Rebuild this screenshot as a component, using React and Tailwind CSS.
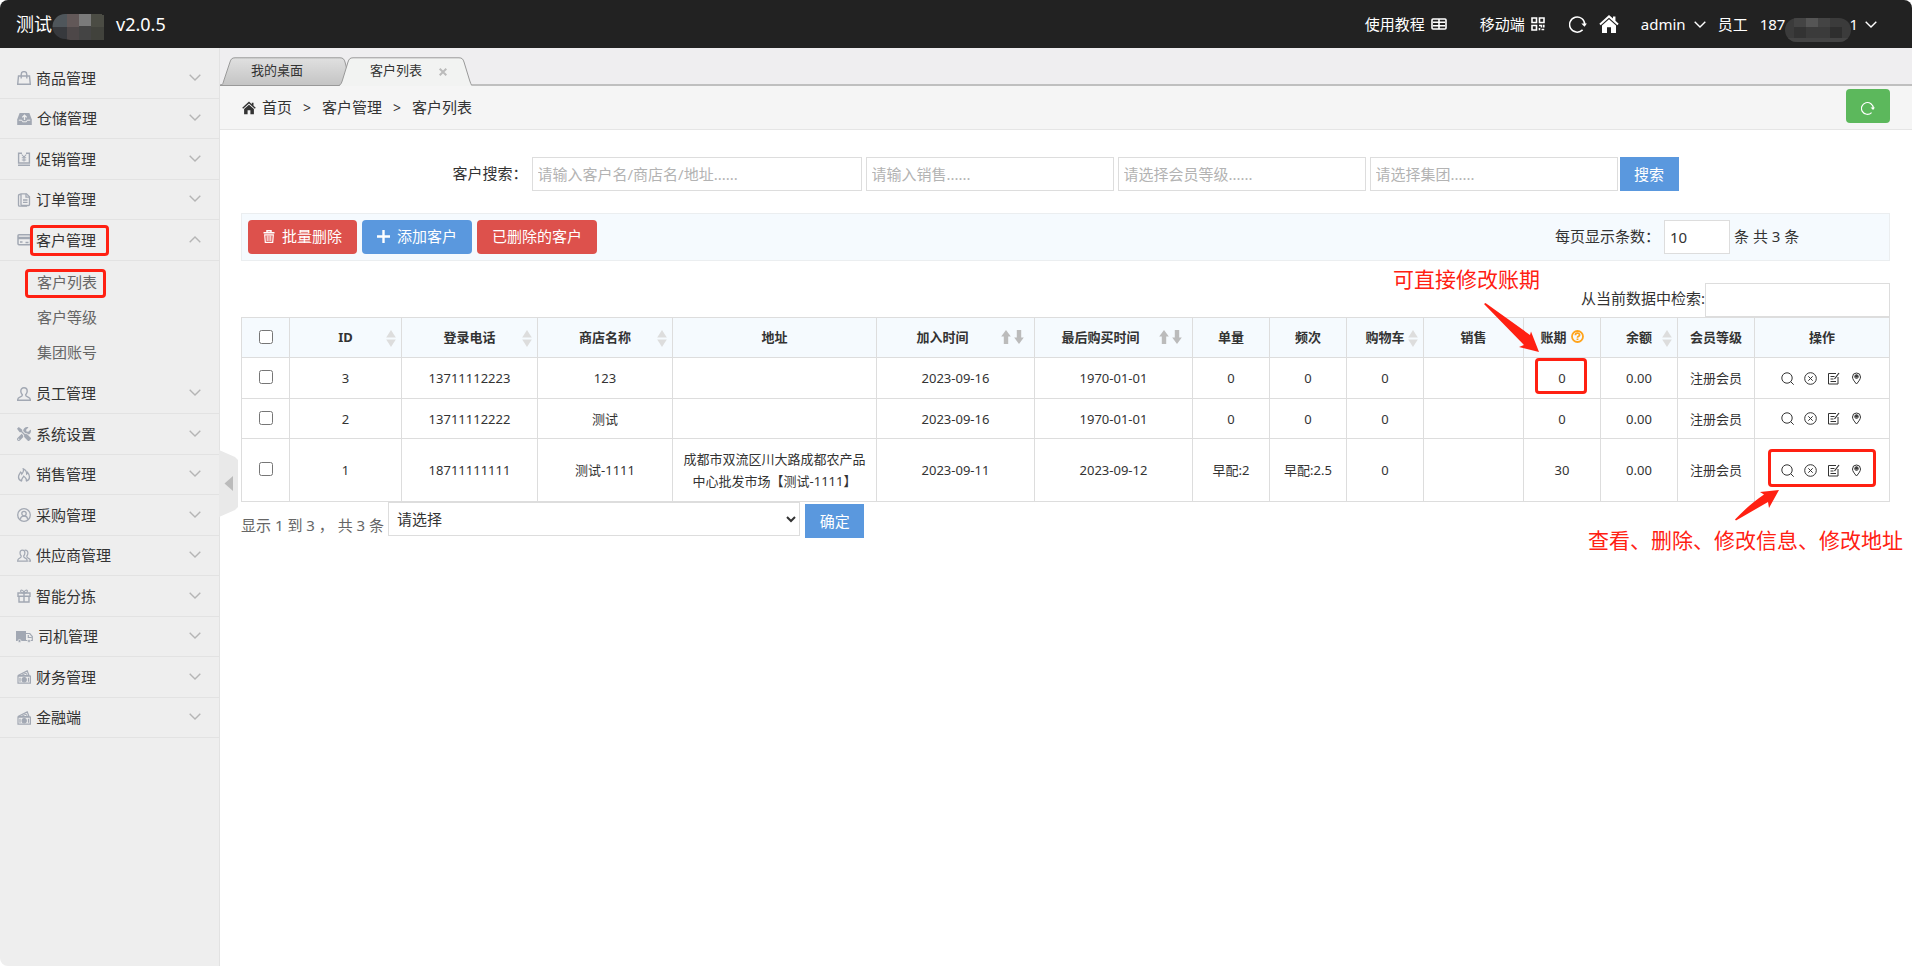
import React, { useState } from 'react';
import { FaTools } from 'react-icons/fa';

const Svg = ({ children, className = 'size-[14px]', box = '0 0 14 14', width = 1.2 }) => (
  <svg viewBox={box} className={`shrink-0 ${className}`} fill="none" stroke="currentColor" strokeWidth={width} aria-hidden="true">
    {children}
  </svg>
);

const BagIcon = () => (
  <Svg width={1.4}>
    <path d="M1.5 5h11l.8 8.300H.7z" />
    <path d="M4.200 7.500V3.400a2.800 2.800 0 0 1 5.600 0v4.100" />
  </Svg>
);

const StoreIcon = () => (
  <Svg className="w-[15px] h-[14px]" box="0 0 15 14">
    <path d="M2.600 1h9.800l2.400 6.500V13H.2V7.500z" fill="currentColor" stroke="none" />
    <path d="M7.500 8V3.500M5.300 5.400l2.200-2.200 2.200 2.200" stroke="#eee" strokeWidth="1.3" />
    <path d="M1.800 8.200h3l.8 1.600h3.800l.8-1.600h3" stroke="#eee" strokeWidth="1" />
  </Svg>
);

const CouponIcon = () => (
  <Svg width={1.4}>
    <path d="M5 1.200H1.600v9.800h10.800V1.200H9M1 13.200h12" />
    <path d="M4.700 2.500l2.300 2.500 2.300-2.500M7 5v4.500M4.800 5.800h4.400M4.800 8h4.400" strokeWidth="1.1" />
  </Svg>
);

const OrderIcon = () => (
  <Svg width={1.3}>
    <path d="M4 .8h5.500l3 3v7.700c0 .6-.4 1-1 1H5c-.6 0-1-.4-1-1z" />
    <path d="M9 .8v3.400h3.500M6 7h4.500M6 9.300h4.500" />
    <path d="M3.800 1.500H2.500c-.6 0-1 .4-1 1v9.700c0 .6.4 1 1 1H10" />
  </Svg>
);

const CardIcon = () => (
  <Svg width={1.5}>
    <rect x="1" y="1.800" width="12.500" height="10" rx="1" />
    <path d="M1 5h12.500" strokeWidth="2.4" />
    <path d="M3 9h2.500M8.500 9.500h3" />
  </Svg>
);

const UserIcon = () => (
  <Svg width={1.4}>
    <path d="M7 .8c2 0 3.200 1.400 3.200 3.400 0 1.700-.8 2.700-1.500 3.500-.4 1.600 1.200 2 2.800 2.600 1.300.5 1.800 1.200 1.900 3H.6c.1-1.800.6-2.500 1.900-3 1.600-.6 3.200-1 2.800-2.600-.7-.8-1.500-1.800-1.500-3.500C3.800 2.200 5 .8 7 .8z" />
  </Svg>
);

const FireIcon = () => (
  <Svg width={1.3}>
    <path d="M4.800 13.200C2.700 12.500 1.500 11 1.500 9c0-2 1.300-3 2-4.800.8.4 1.200 1 1.300 1.800C6.300 4.500 6.800 2.700 6.300.8 8.600 1.800 9.700 3.700 9.700 6c.5-.4.8-.8.9-1.500 1.200 1.300 1.900 2.800 1.900 4.500 0 2-1.200 3.500-3.300 4.200" />
    <path d="M4.800 13.200c-1-1.900.9-2.900 1.900-5 1.500 1.100 3.300 3 2.500 5" />
  </Svg>
);

const BuyerIcon = () => (
  <Svg width={1.3}>
    <circle cx="7" cy="7" r="6.300" />
    <circle cx="7" cy="5.600" r="2.200" />
    <path d="M3.400 11.600c0-2.500 1.500-3.600 3.600-3.600s3.600 1.100 3.600 3.600" />
  </Svg>
);

const UsersIcon = () => (
  <Svg>
    <path d="M5.400 1.200c1.600 0 2.500 1.100 2.500 2.900 0 1.500-.6 2.200-1.200 2.900-.2 1.600 1 1.800 2.200 2.400 1 .5 1.300 1.300 1.400 2.800H.6c.1-1.500.5-2.200 1.400-2.700 1.200-.6 2.400-.9 2.200-2.500C3.600 6.300 3 5.600 3 4.100c0-1.800.8-2.900 2.400-2.900z" />
    <path d="M7.500 1.300c2.200-.6 3.400.7 3.400 2.800 0 1.400-.5 2.200-1.100 2.900-.1 1.300.8 1.900 1.800 2.400 1.200.5 1.800 1 1.900 2.800h-2" />
  </Svg>
);

const GiftIcon = () => (
  <Svg width={1.4}>
    <path d="M1 4h12v3.200H1zM2 7v6h10V7M7 4v9" />
    <path d="M7 4C5 4 3.600 3.200 3.600 2.200 3.600.6 6.500.6 7 4zM7 4c2 0 3.400-.8 3.400-1.800C10.400.6 7.500.6 7 4z" strokeWidth="1.1" />
  </Svg>
);

const TruckIcon = () => (
  <Svg className="w-[17px] h-[13px] -ml-px" box="0 0 17 13">
    <path d="M0 1h10v10H0z" fill="currentColor" stroke="none" />
    <path d="M10 3.500h3.800l2.500 3v4H10" width="1.4" />
    <path d="M12.300 5v2.500h3.500" />
    <circle cx="3.500" cy="11" r="1.500" fill="currentColor" stroke="#eee" strokeWidth=".7" />
    <circle cx="13" cy="11" r="1.500" fill="currentColor" stroke="#eee" strokeWidth=".7" />
  </Svg>
);

const CashIcon = () => (
  <Svg>
    <path d="M1 6.200h12.400v7H1z" />
    <path d="M1 5.500L10.200.9l1.800 4.600z" />
    <path d="M4.500 5.300l4.600-2.200 1.200 2.200" strokeWidth="1" />
    <circle cx="7.200" cy="9.700" r="2.100" fill="currentColor" />
    <path d="M3 7.800v4M11.500 7.800v4" />
  </Svg>
);

const Chevron = ({ up = false, className = '' }) => (
  <Svg className={`w-3 h-[7px] ${className}`} box="0 0 12 7" width={1.4}>
    <path d={up ? 'M.7 6.300L6 1l5.300 5.300' : 'M.7.7L6 6 11.300.7'} />
  </Svg>
);

const HomeIcon = ({ className }) => (
  <Svg className={className} box="0 0 18 18">
    <path d="M9 .8L.3 8.800l1.200 1.300L9 3.300l7.500 6.800 1.200-1.300-2.900-2.700V2.300h-2.200v1.800z" fill="currentColor" stroke="none" />
    <path d="M9 4.800l-6.300 5.600V17h4.500v-5h3.600v5h4.500v-6.600z" fill="currentColor" stroke="none" />
  </Svg>
);

const RefreshIcon = ({ className }) => (
  <Svg className={className} box="0 0 18 18" width={1.5}>
    <path d="M13.600 14.900A7.600 7.600 0 1 1 15.800 9.500" />
    <path d="M12.300 8.500h5.600l-2.400 3.200z" fill="currentColor" stroke="none" />
  </Svg>
);

const TableIcon = () => (
  <Svg className="w-4 h-3" box="0 0 16 12" width={1.6}>
    <rect x="1" y="1" width="14" height="10" rx="1" />
    <path d="M8 1v10M2 4.300h12M2 7.700h12" />
  </Svg>
);

const QrIcon = () => (
  <Svg width={1.6}>
    <path d="M1 1h4.500v4.500H1zM8.500 1H13v4.500H8.500zM1 8.500h4.500V13H1z" />
    <path d="M8 8.500h2.500v2M12.800 7.800v2.700M8.500 11v2.200M10.500 12.500h2.700" />
  </Svg>
);

const TrashIcon = () => (
  <Svg className="w-3 h-[13px]" box="0 0 12 13">
    <path d="M.5 2.800h11M4 2.500V.8h4v1.700" strokeWidth="1.5" />
    <path d="M1.700 4.800l.6 7.500h7.400l.6-7.500z" />
    <path d="M4.200 5.500V11M6 5.500V11M7.800 5.500V11" strokeWidth="1" />
  </Svg>
);

const SortIcon = () => (
  <svg viewBox="0 0 10 17" className="absolute right-[5px] top-1/2 -mt-2 w-[10px] h-[17px]" fill="#ddd" aria-hidden="true">
    <path d="M5 0l4.800 7.500H.2zM5 17l4.800-7.500H.2z" />
  </svg>
);

const ArrowsIcon = () => (
  <svg viewBox="0 0 23 14" className="absolute right-[10px] top-1/2 -mt-2 w-[23px] h-[14px]" fill="#bbb" aria-hidden="true">
    <path d="M5 0l4.800 6.500H7.200V14H2.800V6.500H.2zM18 14l4.800-6.500h-2.600V0h-4.400v7.500h-2.600z" />
  </svg>
);

const menu = [
  { name: '商品管理', icon: <BagIcon /> },
  { name: '仓储管理', icon: <StoreIcon /> },
  { name: '促销管理', icon: <CouponIcon /> },
  { name: '订单管理', icon: <OrderIcon /> },
  { name: '客户管理', icon: <CardIcon />, children: ['客户列表', '客户等级', '集团账号'] },
  { name: '员工管理', icon: <UserIcon /> },
  { name: '系统设置', icon: <FaTools className="size-[14px]" /> },
  { name: '销售管理', icon: <FireIcon /> },
  { name: '采购管理', icon: <BuyerIcon /> },
  { name: '供应商管理', icon: <UsersIcon /> },
  { name: '智能分拣', icon: <GiftIcon /> },
  { name: '司机管理', icon: <TruckIcon /> },
  { name: '财务管理', icon: <CashIcon /> },
  { name: '金融端', icon: <CashIcon /> },
];

const columns = [
  { name: 'ID', width: 'w-[112px]', sort: 'caret' },
  { name: '登录电话', width: 'w-[136px]', sort: 'caret' },
  { name: '商店名称', width: 'w-[135px]', sort: 'caret' },
  { name: '地址', width: '' },
  { name: '加入时间', width: 'w-[158px]', sort: 'arrows' },
  { name: '最后购买时间', width: 'w-[158px]', sort: 'arrows' },
  { name: '单量', width: 'w-[77px]' },
  { name: '频次', width: 'w-[77px]' },
  { name: '购物车', width: 'w-[77px]', sort: 'caret' },
  { name: '销售', width: 'w-[100px]' },
  { name: '账期', width: 'w-[77px]', help: true },
  { name: '余额', width: 'w-[77px]', sort: 'caret' },
  { name: '会员等级', width: 'w-[77px]' },
  { name: '操作', width: 'w-[135px]' },
];

const customers = [
  { id: 3, phone: '13711112223', shop: '123', address: '', joined: '2023-09-16', last: '1970-01-01', count: '0', freq: '0', cart: '0', sales: '', term: '0', balance: '0.00', level: '注册会员', markTerm: true },
  { id: 2, phone: '13711112222', shop: '测试', address: '', joined: '2023-09-16', last: '1970-01-01', count: '0', freq: '0', cart: '0', sales: '', term: '0', balance: '0.00', level: '注册会员' },
  { id: 1, phone: '18711111111', shop: '测试-1111', address: '成都市双流区川大路成都农产品中心批发市场【测试-1111】', joined: '2023-09-11', last: '2023-09-12', count: '早配:2', freq: '早配:2.5', cart: '0', sales: '', term: '30', balance: '0.00', level: '注册会员', markActions: true },
];

const Mark = ({ className }) => (
  <span className={`absolute border-3 border-[#ff2012] rounded pointer-events-none ${className}`} />
);

const TopBar = () => (
  <header className="h-12 bg-[#222] text-white flex items-center justify-between pl-4 pr-[35px] whitespace-nowrap">
    <div className="flex items-center text-lg">
      <span>测试</span>
      <svg viewBox="0 0 52 26" className="w-[52px] h-[26px] mt-1.5" aria-hidden="true">
        <clipPath id="logoMask"><path d="M13 0h37v1h2v25H18l-5-1A12.500 12.500 0 0 1 13 0z" /></clipPath>
        <g clipPath="url(#logoMask)">
          <path fill="#4f565b" d="M0 0h15v13H0z" />
          <path fill="#625858" d="M15 0h12v13H15z" />
          <path fill="#7b7b7b" d="M27 0h12v13H27z" />
          <path fill="#4b4c44" d="M39 0h13v13H39z" />
          <path fill="#37393d" d="M0 13h15v13H0z" />
          <path fill="#4d4748" d="M15 13h12v13H15z" />
          <path fill="#444" d="M27 12h12v14H27z" />
          <path fill="#41423c" d="M39 13h13v13H39z" />
        </g>
      </svg>
      <span className="ml-3">v2.0.5</span>
    </div>
    <div className="flex items-center text-[15px]">
      <a href="#tutorial" className="flex items-center gap-1.5 mr-[33px]">使用教程 <TableIcon /></a>
      <a href="#mobile" className="flex items-center gap-1.5 mr-6">移动端 <QrIcon /></a>
      <button aria-label="刷新"><RefreshIcon className="size-[18px]" /></button>
      <a href="#home" aria-label="首页" className="ml-3 mr-[22px]"><HomeIcon className="size-5" /></a>
      <button className="flex items-center gap-2 mr-3">admin <Chevron /></button>
      <button className="flex items-center">
        <span className="mr-3">员工</span>
        <span>187</span>
        <svg viewBox="0 0 66 24" className="w-[66px] h-6 mt-[11px]" aria-hidden="true">
          <clipPath id="phoneMask"><rect width="66" height="24" rx="12" /></clipPath>
          <g clipPath="url(#phoneMask)">
            <path fill="#3b3b3b" d="M0 0h66v24H0z" />
            <path fill="#555" d="M21 0h12v9H21z" />
            <path fill="#444" d="M9 0h12v9H9zM33 0h12v9H33zM0 20h66v4H0z" />
            <path fill="#2e2e2e" d="M45 9h12v11H45z" />
            <path fill="#333" d="M9 9h12v11H9z" />
          </g>
        </svg>
        <span className="-ml-0.5 mr-[7px]">1</span>
        <Chevron />
      </button>
    </div>
  </header>
);

const Sidebar = () => (
  <aside className="relative w-[220px] shrink-0 bg-[#eee] border-r border-[#e2e2e2] pt-[10px]">
    <ul className="text-[15px] text-[#333]">
      {menu.map((item) => (
        <li key={item.name} className="group">
          <a
            href="#menu"
            className="relative flex items-center gap-[5px] pl-[17px] pr-[18px] h-10 group-odd:h-[41px] border-b border-[#e2e2e2]"
          >
            <span className="text-[#a2a8b3]">{item.icon}</span>
            <span className="grow">{item.name}</span>
            <Chevron up={!!item.children} className="text-[#b5b5b5] mb-0.5" />
            {item.children && <Mark className="left-[30px] top-[5px] w-[79px] h-[31px]" />}
          </a>
          {item.children && (
            <ul className="py-1 text-[#666]">
              {item.children.map((child, i) => (
                <li key={child}>
                  <a href="#sub" className="relative flex items-center h-[35px] pl-[37px]">
                    {child}
                    {i === 0 && <Mark className="left-[25px] top-1 w-[81px] h-[29px]" />}
                  </a>
                </li>
              ))}
            </ul>
          )}
        </li>
      ))}
    </ul>
    <button aria-label="收起菜单" className="absolute left-full top-[402px]">
      <svg viewBox="0 0 19 67" className="w-[19px] h-[67px]">
        <path d="M0 0l16 7 3 3v47l-3 3-16 7z" fill="#e9e9e9" />
        <path d="M5.500 33.500l8.500-7.500v15z" fill="#bbb" />
      </svg>
    </button>
  </aside>
);

const TabBar = () => (
  <div className="h-[38px] bg-[#efeef0] border-b-2 border-[#bfbfbf] flex items-end text-[13px] leading-5 text-[#333]">
    <a href="#desktop" className="relative h-[29px] w-[131px] -mb-0.5 pl-[31px] pt-[3px]">
      <svg viewBox="0 0 131 29" className="absolute inset-0 w-full h-full" aria-hidden="true">
        <defs>
          <linearGradient id="tabIdle" x1="0" y1="0" x2="0" y2="1">
            <stop offset="0" stopColor="#e0e0e0" />
            <stop offset="1" stopColor="#c4c4c4" />
          </linearGradient>
        </defs>
        <path d="M0 28.500C3 28 3 26 4 23l6-18C11 2 12 .8 15 .8h105c3 0 4 1.200 5 4.200l6 23.500z" fill="url(#tabIdle)" stroke="#999" />
      </svg>
      <span className="relative">我的桌面</span>
    </a>
    <a href="#list" className="relative h-[29px] w-[133px] -ml-3 -mb-0.5 pl-[31px] pt-[3px] flex items-start">
      <svg viewBox="0 0 133 29" className="absolute inset-0 w-full h-full" aria-hidden="true">
        <path d="M0 29c2-1 2.500-3 3.500-6L9 5c1-3 2-4.200 5-4.200h106c3 0 4 1.200 5 4.200l5.500 18c1 3 1.500 5 2.500 6z" fill="#f2f3f2" />
        <path d="M0 28.500c2-1 2.500-2.500 3.500-5.500L9 5c1-3 2-4.200 5-4.200h106c3 0 4 1.200 5 4.200l5.500 18c1 3 1.500 4.500 2.500 5.500" fill="none" stroke="#999" />
      </svg>
      <span className="relative">客户列表</span>
      <span className="relative ml-[17px] mt-2 text-[#bbb]">
        <Svg className="size-2" box="0 0 8 8" width={2}><path d="M.7.7l6.600 6.600M7.300.7L.7 7.300" /></Svg>
      </span>
    </a>
  </div>
);

const Breadcrumb = () => (
  <nav className="h-11 bg-[#f5f5f5] border-b border-[#e5e5e5] flex items-center justify-between px-[22px] text-[15px]">
    <div className="flex items-center gap-[11px]">
      <a href="#home" className="flex items-center gap-1.5"><HomeIcon className="size-[14px]" />首页</a>
      <span className="text-sm">&gt;</span>
      <span>客户管理</span>
      <span className="text-sm">&gt;</span>
      <span>客户列表</span>
    </div>
    <button aria-label="刷新" className="w-11 h-[34px] mb-1 rounded bg-[#5cb85c] text-white flex items-center justify-center">
      <RefreshIcon className="size-[14px] mt-1" />
    </button>
  </nav>
);

const field = 'h-[34px] border border-[#ddd] bg-white pl-[5px] placeholder:text-[#b3b3b3] outline-none';

const SearchForm = () => (
  <form className="flex items-center justify-center gap-1 mt-[27px]" onSubmit={(e) => e.preventDefault()}>
    <label htmlFor="keyword" className="pb-0.5">客户搜索：</label>
    <input id="keyword" className={`${field} w-[330px]`} placeholder="请输入客户名/商店名/地址......" />
    <input aria-label="销售" className={`${field} w-[248px]`} placeholder="请输入销售......" />
    <input aria-label="会员等级" className={`${field} w-[248px]`} placeholder="请选择会员等级......" />
    <input aria-label="集团" className={`${field} w-[248px]`} placeholder="请选择集团......" />
    <button className="-ml-0.5 h-[34px] w-[59px] bg-[#5a98de] text-white">搜索</button>
  </form>
);

const Toolbar = () => {
  const [size, setSize] = useState('10');

  return (
    <div className="mt-[22px] h-12 bg-[#f5fafe] border border-[#ebeef0] flex items-center justify-between pl-1.5 pr-[86px]">
      <div className="flex gap-[5px] text-white">
        <button className="h-[34px] px-[15px] pb-0.5 rounded bg-[#dd514c] flex items-center gap-[7px]"><TrashIcon />批量删除</button>
        <button className="h-[34px] px-[15px] pb-0.5 rounded bg-[#5a98de] flex items-center gap-[7px]">
          <Svg className="size-[13px]" box="0 0 13 13" width={2.4}><path d="M6.500 0v13M0 6.500h13" /></Svg>
          添加客户
        </button>
        <button className="h-[34px] px-[15px] pb-0.5 rounded bg-[#dd514c]">已删除的客户</button>
      </div>
      <div className="flex items-center">
        <label htmlFor="pageSize" className="pb-0.5">每页显示条数：</label>
        <input id="pageSize" className={`${field} w-[66px] mx-1`} value={size} onChange={(e) => setSize(e.target.value)} />
        <span className="pb-0.5 w-[69px] whitespace-nowrap">条 共 3 条</span>
      </div>
    </div>
  );
};

const Actions = () => (
  <div className="flex items-center justify-center gap-[10px]">
    <button aria-label="查看">
      <Svg className="size-[13px]" box="0 0 13 13" width={1}><circle cx="6" cy="6" r="5.200" /><path d="M9.700 9.700l3 3" /></Svg>
    </button>
    <button aria-label="删除">
      <Svg className="size-[13px]" box="0 0 13 13" width={1}><circle cx="6.500" cy="6.500" r="5.800" /><path d="M4.300 4.300l4.400 4.400M8.700 4.300L4.300 8.700" /></Svg>
    </button>
    <button aria-label="修改信息">
      <Svg className="size-[13px]" box="0 0 13 13" width={1}>
        <path d="M9 1.500H1.500V12h9.500V5M3.500 4.500h4M3.500 7h3M3.500 9.500h5.500" />
        <path d="M7.500 7l4.500-6" strokeWidth="1.2" />
      </Svg>
    </button>
    <button aria-label="修改地址">
      <Svg className="size-[13px]" box="0 0 13 13" width={1}>
        <path d="M6.500 12C4 9 2.500 7 2.500 5a4 4 0 0 1 8 0c0 2-1.500 4-4 7z" />
        <circle cx="6.500" cy="4.600" r="1.800" />
        <circle cx="6.500" cy="4.200" r="1" fill="currentColor" />
      </Svg>
    </button>
  </div>
);

const cell = 'border border-[#ddd]';

const CustomerTable = () => (
  <table className="w-full table-fixed border-collapse text-[13px] leading-[22px] text-center">
    <thead className="bg-[#f5fafe]">
      <tr className="h-10">
        <th className={`${cell} w-12 pb-0.5`}>
          <input type="checkbox" aria-label="全选" className="block mx-auto size-[14px]" />
        </th>
        {columns.map((col) => (
          <th key={col.name} className={`${cell} relative pb-0.5 whitespace-nowrap font-bold ${col.width} ${col.sort === 'arrows' ? 'pr-[26px]' : ''}`}>
            {col.help ? (
              <span className="flex items-center justify-center gap-1">
                {col.name}
                <svg viewBox="0 0 13 13" className="size-[13px]" aria-hidden="true">
                  <circle cx="6.500" cy="6.500" r="5.500" fill="none" stroke="#ffa41c" strokeWidth="1.8" />
                  <path d="M4.400 5.200c0-2.600 4.200-2.600 4.200-.2 0 1.400-2.100 1.300-2.100 2.700M6.500 8.600v1.500" fill="none" stroke="#ffa41c" strokeWidth="1.8" />
                </svg>
              </span>
            ) : (
              col.name
            )}
            {col.sort === 'caret' && <SortIcon />}
            {col.sort === 'arrows' && <ArrowsIcon />}
          </th>
        ))}
      </tr>
    </thead>
    <tbody>
      {customers.map((row) => (
        <tr key={row.id} className="h-[41px] even:h-10">
          <td className={`${cell} pb-0.5`}>
            <input type="checkbox" aria-label={`选择 ${row.id}`} className="block mx-auto size-[14px]" />
          </td>
          <td className={cell}>{row.id}</td>
          <td className={cell}>{row.phone}</td>
          <td className={cell}>{row.shop}</td>
          <td className={`${cell} px-2 py-[9px]`}>{row.address}</td>
          <td className={cell}>{row.joined}</td>
          <td className={cell}>{row.last}</td>
          <td className={cell}>{row.count}</td>
          <td className={cell}>{row.freq}</td>
          <td className={cell}>{row.cart}</td>
          <td className={cell}>{row.sales}</td>
          <td className={`${cell} relative`}>
            {row.term}
            {row.markTerm && <Mark className="left-[11px] right-[13px] top-0 bottom-1" />}
          </td>
          <td className={cell}>{row.balance}</td>
          <td className={cell}>{row.level}</td>
          <td className={`${cell} relative`}>
            <Actions />
            {row.markActions && <Mark className="inset-x-[13px] top-[10px] bottom-[14px]" />}
          </td>
        </tr>
      ))}
    </tbody>
  </table>
);

// red notes laid over the table, anchored to its right edge
const Notes = () => (
  <div className="absolute inset-0 pointer-events-none text-[21px] leading-8 text-[#ff2012] whitespace-nowrap">
    <span className="absolute right-[350px] top-[-20px]">可直接修改账期</span>
    <svg viewBox="0 0 56 50" className="absolute right-[351px] top-5 w-14 h-[50px]" fill="currentColor" aria-hidden="true">
      <path d="M1 1l1.500-1L47 32l1-3.500L56 49l-20-5 5-2z" />
    </svg>
    <svg viewBox="0 0 46 32" className="absolute right-[110px] top-[206px] w-[46px] h-8" fill="currentColor" aria-hidden="true">
      <path d="M1 30.500C10 21 20 12 30 5.500L26 3l19-2-10 18-1-6L2 31.500z" />
    </svg>
    <span className="absolute -right-[13px] top-[241px]">查看、删除、修改信息、修改地址</span>
  </div>
);

const App = () => {
  return (
    <div className="min-h-screen flex flex-col rounded-lg overflow-hidden bg-white text-[#333] font-['Noto_Sans','Noto_Sans_CJK_SC',sans-serif]">
      <TopBar />
      <div className="grow flex">
        <Sidebar />
        <main className="grow min-w-0">
          <TabBar />
          <Breadcrumb />
          <div className="pl-[21px] pr-[22px] text-[15px]">
            <SearchForm />
            <Toolbar />
            <div className="relative mt-[22px]">
              <div className="flex items-center justify-end">
                <label htmlFor="filter" className="pb-1">从当前数据中检索:</label>
                <input id="filter" className={`${field} w-[185px]`} />
              </div>
              <CustomerTable />
              <div className="flex items-start">
                <span className="w-[147px] shrink-0 pt-3 text-[#666] whitespace-nowrap">显示 1 到 3 ， 共 3 条</span>
                <select aria-label="批量操作" className="w-1/4 h-[34px] border border-[#ddd] bg-white pl-1">
                  <option>请选择</option>
                </select>
                <button className="mt-0.5 ml-[5px] h-[34px] w-[59px] bg-[#5a98de] text-white">确定</button>
              </div>
              <Notes />
            </div>
          </div>
        </main>
      </div>
    </div>
  );
};

export default App;
